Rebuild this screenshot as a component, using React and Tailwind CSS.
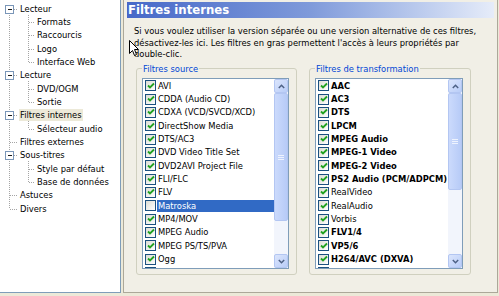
import React from "react";

const FONT = "font-['DejaVu_Sans_Condensed','Liberation_Sans',sans-serif]";
const ROW = 13.33;

const TREE = [
  { label: "Lecteur", level: 0, exp: true },
  { label: "Formats", level: 1 },
  { label: "Raccourcis", level: 1 },
  { label: "Logo", level: 1 },
  { label: "Interface Web", level: 1 },
  { label: "Lecture", level: 0, exp: true },
  { label: "DVD/OGM", level: 1 },
  { label: "Sortie", level: 1 },
  { label: "Filtres internes", level: 0, exp: true, selected: true },
  { label: "Sélecteur audio", level: 1 },
  { label: "Filtres externes", level: 0 },
  { label: "Sous-titres", level: 0, exp: true },
  { label: "Style par défaut", level: 1 },
  { label: "Base de données", level: 1 },
  { label: "Astuces", level: 0 },
  { label: "Divers", level: 0 },
];

// [label, checked, bold, selected]
const SOURCE = [
  ["AVI"], ["CDDA (Audio CD)"], ["CDXA (VCD/SVCD/XCD)"], ["DirectShow Media"], ["DTS/AC3"],
  ["DVD Video Title Set"], ["DVD2AVI Project File"], ["FLI/FLC"], ["FLV"],
  ["Matroska", false, false, true], ["MP4/MOV"], ["MPEG Audio"], ["MPEG PS/TS/PVA"], ["Ogg"], [""],
];

const TRANSFORM = [
  ["AAC", true, true], ["AC3", true, true], ["DTS", true, true], ["LPCM", true, true],
  ["MPEG Audio", true, true], ["MPEG-1 Video", true, true], ["MPEG-2 Video", true, true],
  ["PS2 Audio (PCM/ADPCM)", true, true], ["RealVideo"], ["RealAudio"], ["Vorbis"],
  ["FLV1/4", true, true], ["VP5/6", true, true], ["H264/AVC (DXVA)", true, true], [""],
];

const cy = (i) => 2 + ROW * i + ROW / 2;

function TreeLines() {
  const last = TREE.length - 1;
  const groups = [];
  TREE.forEach((n, i) => {
    if (n.exp) {
      let j = i + 1;
      while (j < TREE.length && TREE[j].level === 1) j++;
      groups.push([i, j - 1]);
    }
  });
  return (
    <svg className="absolute left-0 top-0" width="121" height="293" shapeRendering="crispEdges">
      <g stroke="#a5a5a5" strokeWidth="1" strokeDasharray="1 1" fill="none">
        <line x1="9.5" y1={cy(0)} x2="9.5" y2={cy(last)} />
        {TREE.map((n, i) =>
          n.level === 0 ? (
            <line key={i} x1="9.5" y1={Math.round(cy(i)) + 0.5} x2="18" y2={Math.round(cy(i)) + 0.5} />
          ) : (
            <line key={i} x1="28.5" y1={Math.round(cy(i)) + 0.5} x2="35" y2={Math.round(cy(i)) + 0.5} />
          )
        )}
        {groups.map(([a, b]) => (
          <line key={a} x1="28.5" y1={cy(a) + 6} x2="28.5" y2={cy(b)} />
        ))}
      </g>
      {TREE.map((n, i) =>
        n.exp ? (
          <g key={i}>
            <rect x="5.5" y={Math.round(cy(i)) - 3.5} width="8" height="8" fill="#fff" stroke="#7a96b8" />
            <line x1="7.5" y1={Math.round(cy(i)) + 0.5} x2="12" y2={Math.round(cy(i)) + 0.5} stroke="#1a1a1a" />
          </g>
        ) : null
      )}
    </svg>
  );
}

function Tree() {
  return (
    <div className="relative w-[121px] h-[293px] shrink-0 bg-white border-r border-b border-[#7f9db9] pt-[2px]">
      <TreeLines />
      <div className="relative">
        {TREE.map((n, i) => (
          <div key={i} className={`h-[13.33px] flex items-center ${n.level === 0 ? "pl-[19px]" : "pl-[36px]"}`}>
            <span className={`px-[1px] leading-[12px] text-[9.3px] text-black ${n.selected ? "bg-[#ece9d8]" : ""}`}>{n.label}</span>
          </div>
        ))}
      </div>
    </div>
  );
}

function Check({ checked }) {
  return (
    <div className="w-[11px] h-[11px] shrink-0 border border-[#1c5180] bg-gradient-to-br from-[#dcdcd4] to-white flex items-center justify-center">
      {checked && (
        <svg width="8" height="8" viewBox="0 0 8 8">
          <path d="M1 3.5 L3 5.5 L7 1.5" stroke="#21a121" strokeWidth="1.8" fill="none" />
        </svg>
      )}
    </div>
  );
}

function Arrow({ up }) {
  return (
    <div className="h-[14px] shrink-0 rounded-[2px] border border-[#b3c6f2] bg-gradient-to-br from-[#dbe5fc] to-[#b9cdf8] flex items-center justify-center">
      <svg width="7" height="5" viewBox="0 0 7 5">
        <path d={up ? "M0.8 4 L3.5 1.3 L6.2 4" : "M0.8 1 L3.5 3.7 L6.2 1"} stroke="#4d6185" strokeWidth="1.5" fill="none" />
      </svg>
    </div>
  );
}

function ScrollBar({ thumb }) {
  return (
    <div className="w-[14px] shrink-0 flex flex-col bg-[#f2f5fc]">
      <Arrow up />
      <div className="shrink-0 rounded-[2px] border border-[#b3c6f2] bg-gradient-to-r from-[#cbdafc] to-[#b7cbf7] flex flex-col items-center justify-center gap-[1px]" style={{ height: thumb }}>
        <div className="w-[6px] h-[1px] bg-[#eef3fe]" />
        <div className="w-[6px] h-[1px] bg-[#eef3fe]" />
        <div className="w-[6px] h-[1px] bg-[#eef3fe]" />
      </div>
      <div className="flex-1" />
      <Arrow />
    </div>
  );
}

function ListBox({ items, thumb, width }) {
  return (
    <div className="h-[191px] mt-[4px] border border-[#7f9db9] bg-white flex overflow-hidden" style={{ width }}>
      <div className="flex-1 overflow-hidden pl-[2px]">
        {items.map(([label, checked = true, bold = false, sel = false], i) => (
          <div key={i} className="h-[13.33px] flex items-center">
            <Check checked={checked} />
            <span className={`flex-1 ml-[1px] pl-[1px] h-[12px] leading-[12px] text-[9.3px] whitespace-nowrap ${bold ? "font-bold" : ""} ${sel ? "bg-[#316ac5] text-white" : "text-black"}`}>{label}</span>
          </div>
        ))}
      </div>
      <ScrollBar thumb={thumb} />
    </div>
  );
}

function Group({ title, children, className }) {
  return (
    <fieldset className={`rounded-[3px] border border-[#d0d0bf] pl-[5px] pr-[6px] pb-[5px] ${className}`}>
      <legend className="px-[1px] text-[9.3px] leading-[11px] text-[#0046d5]">{title}</legend>
      {children}
    </fieldset>
  );
}

function Cursor() {
  return (
    <svg className="absolute left-[129px] top-[40px]" width="11" height="17" viewBox="0 0 11 17">
      <path d="M0.5 0.5 L0.5 13.5 L3.5 10.5 L5.5 15.5 L7.5 14.5 L5.5 9.5 L9.5 9.5 Z" fill="#fff" stroke="#000" strokeWidth="1" />
    </svg>
  );
}

export default function App() {
  return (
    <div className={`relative w-[499px] h-[296px] bg-[#ece9d8] flex ${FONT} overflow-hidden`}>
      <Tree />
      <div className="ml-[2px] w-[375px] h-[293px] border-l border-r border-b border-[#aca899] bg-[#f1efe6] px-[3px] pt-[2px] flex flex-col">
        <div className="h-[16px] bg-gradient-to-r from-[#4768c8] via-[#7f9ada] to-[#e6ecf9] flex items-center pl-[1px]">
          <span className="text-white font-bold text-[13px] leading-[16px]">Filtres internes</span>
        </div>
        <p className="mt-[7px] pl-[7px] pr-[2px] text-[9.3px] leading-[11.7px] text-black whitespace-nowrap">
          Si vous voulez utiliser la version séparée ou une version alternative de ces filtres,
          <br />
          désactivez-les ici. Les filtres en gras permettent l'accès à leurs propriétés par
          <br />
          double-clic.
        </p>
        <div className="mt-[3px] ml-[9px] flex gap-[12px]">
          <Group title="Filtres source" className="w-[161px]">
            <ListBox items={SOURCE} thumb={128} width={147} />
          </Group>
          <Group title="Filtres de transformation" className="w-[162px]">
            <ListBox items={TRANSFORM} thumb={97} width={148} />
          </Group>
        </div>
      </div>
      <Cursor />
    </div>
  );
}
